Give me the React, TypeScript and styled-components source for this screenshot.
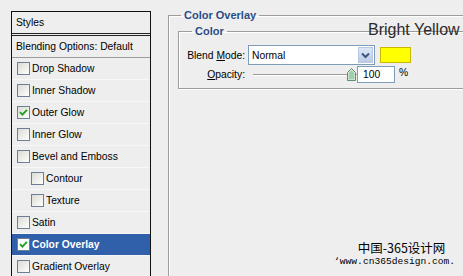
import React from "react";
import styled, { createGlobalStyle, css } from "styled-components";

const Global = createGlobalStyle`
  html, body { margin: 0; padding: 0; background: #eeeeee; overflow: hidden; }
  body { font-family: "Liberation Sans", Arial, sans-serif; font-size: 10.3px; color: #000; }
  #root { width: 463px; height: 276px; overflow: hidden; position: relative; }
`;

const Page = styled.div`
  display: flex;
  align-items: flex-start;
  padding-left: 11px;
  height: 276px;
`;

const StyleList = styled.div`
  margin-top: 11px;
  width: 140px;
  height: 280px;
  box-sizing: border-box;
  border: 1px solid #111;
  border-bottom: none;
  display: flex;
  flex-direction: column;
  flex: none;
`;

const HeaderRow = styled.div`
  height: 21px;
  display: flex;
  align-items: center;
  padding-left: 4px;
  border-bottom: 3px double #222;
`;

const Row = styled.div<{ $indent?: boolean; $active?: boolean; $strong?: boolean }>`
  height: 21px;
  display: flex;
  align-items: center;
  gap: 2px;
  padding-left: ${(p) => (p.$indent ? 19 : 5)}px;
  border-bottom: 1px solid ${(p) => (p.$strong ? "#9a9a9a" : "#f7f7f7")};
  ${(p) =>
    p.$active &&
    css`
      background: #3160aa;
      color: #fff;
      font-weight: bold;
    `}
`;

const PlainRow = styled(Row)`
  padding-left: 4px;
`;

const Box = styled.span<{ $light?: boolean }>`
  width: 11px;
  height: 11px;
  flex: none;
  border: 1px solid #6d7f96;
  background: ${(p) =>
    p.$light ? "#ffffff" : "linear-gradient(135deg, #dcdcd6 0%, #f4f4f0 70%, #ffffff 100%)"};
  display: flex;
  align-items: center;
  justify-content: center;
`;

const CheckBox = ({ checked, light }: { checked?: boolean; light?: boolean }) => (
  <Box $light={light}>
    {checked && (
      <svg width="9" height="9" viewBox="0 0 9 9">
        <path d="M1 4.2 L3.4 6.6 L8 1.8" fill="none" stroke="#21a121" strokeWidth="1.9" />
      </svg>
    )}
  </Box>
);

const Outer = styled.fieldset`
  margin: 8px 0 0 17px;
  padding: 2px 0 0 9px;
  width: 320px;
  min-height: 300px;
  flex: none;
  border: 1px solid #9c9c9c;
  box-shadow: inset 1px 1px 0 #ffffff;
  box-sizing: border-box;
`;

const Legend = styled.legend<{ $offset: number }>`
  margin-left: ${(p) => p.$offset}px;
  padding: 0 3px;
  line-height: 14px;
  font-weight: bold;
  font-size: 11px;
  color: #2a4d85;
`;

const Inner = styled.fieldset`
  margin: 0;
  padding: 7px 0 4px 0;
  width: 320px;
  border: 1px solid #9c9c9c;
  box-shadow: inset 1px 1px 0 #ffffff, 1px 1px 0 #ffffff;
  box-sizing: border-box;
`;

const FieldRow = styled.div<{ $h: number }>`
  display: flex;
  align-items: center;
  height: ${(p) => p.$h}px;
  margin-bottom: 1px;
`;

const Label = styled.label`
  width: 66px;
  text-align: right;
  flex: none;
  margin-right: 3px;
  u { text-decoration: underline; }
`;

const Select = styled.div`
  width: 127px;
  height: 20px;
  box-sizing: border-box;
  border: 1px solid #7f9db9;
  background: #fff;
  display: flex;
  align-items: center;
  justify-content: space-between;
  padding: 0 1px 0 3px;
`;

const DropButton = styled.span`
  width: 15px;
  height: 16px;
  box-sizing: border-box;
  border: 1px solid #b7c8e3;
  background: linear-gradient(#dce6f6, #bccbe6);
  display: flex;
  align-items: center;
  justify-content: center;
`;

const Swatch = styled.span`
  width: 31px;
  height: 16px;
  margin-left: 5px;
  box-sizing: border-box;
  background: #ffff00;
  border: 1px solid #c9b700;
`;

const Slider = styled.div`
  width: 104px;
  margin-left: 5px;
  height: 16px;
  position: relative;
  display: flex;
  align-items: center;
`;

const Track = styled.span`
  flex: 1;
  height: 1px;
  background: #9a9a9a;
  box-shadow: 0 1px 0 #ffffff;
`;

const Thumb = styled.svg`
  position: absolute;
  right: 1px;
  top: 1px;
`;

const NumInput = styled.div`
  width: 38px;
  height: 17px;
  box-sizing: border-box;
  border: 1px solid #7f9db9;
  background: #fff;
  padding-left: 5px;
  display: flex;
  align-items: center;
`;

const Percent = styled.span`
  margin-left: 4px;
  align-self: flex-start;
  margin-top: 1px;
`;

const Annotation = styled.div`
  position: absolute;
  left: 368px;
  top: 21px;
  font-size: 16px;
  line-height: 18px;
  color: #2b2b2b;
  font-family: "Liberation Sans", Arial, sans-serif;
  white-space: nowrap;
`;

const Watermark = styled.div`
  position: absolute;
  right: 8px;
  bottom: 7px;
  display: flex;
  flex-direction: column;
  align-items: center;
  color: #000;
  line-height: 14px;
`;

const WmTitle = styled.span`
  font-family: "Noto Sans CJK SC", sans-serif;
  font-size: 12.5px;
  margin-left: 14px;
`;

const WmUrl = styled.span`
  font-family: "Liberation Mono", monospace;
  font-size: 9.6px;
`;

const items: { name: string; checked?: boolean; indent?: boolean; active?: boolean }[] = [
  { name: "Drop Shadow" },
  { name: "Inner Shadow" },
  { name: "Outer Glow", checked: true },
  { name: "Inner Glow" },
  { name: "Bevel and Emboss" },
  { name: "Contour", indent: true },
  { name: "Texture", indent: true },
  { name: "Satin" },
  { name: "Color Overlay", checked: true, active: true },
  { name: "Gradient Overlay" },
];

export default function App() {
  return (
    <>
      <Global />
      <Page>
        <StyleList>
          <HeaderRow>Styles</HeaderRow>
          <PlainRow $strong>Blending Options: Default</PlainRow>
          {items.map((it) => (
            <Row key={it.name} $indent={it.indent} $active={it.active}>
              <CheckBox checked={it.checked} light={it.active} />
              <span>{it.name}</span>
            </Row>
          ))}
        </StyleList>
        <Outer>
          <Legend $offset={3}>Color Overlay</Legend>
          <Inner>
            <Legend $offset={13}>Color</Legend>
            <FieldRow $h={20}>
              <Label>
                Blend <u>M</u>ode:
              </Label>
              <Select>
                <span>Normal</span>
                <DropButton>
                  <svg width="9" height="7" viewBox="0 0 9 7">
                    <path d="M1 1.5 L4.5 5 L8 1.5" fill="none" stroke="#3d5680" strokeWidth="2" />
                  </svg>
                </DropButton>
              </Select>
              <Swatch />
            </FieldRow>
            <FieldRow $h={17}>
              <Label>
                <u>O</u>pacity:
              </Label>
              <Slider>
                <Track />
                <Thumb width="9" height="13" viewBox="0 0 9 13">
                  <path d="M0.5 4.5 L4.5 0.5 L8.5 4.5 L8.5 12.5 L0.5 12.5 Z" fill="#cfe3d2" stroke="#5f8f6a" />
                  <path d="M2 5 L4.5 2.5 L7 5 L7 11 L2 11 Z" fill="#9fcfa6" />
                </Thumb>
              </Slider>
              <NumInput>100</NumInput>
              <Percent>%</Percent>
            </FieldRow>
          </Inner>
        </Outer>
      </Page>
      <Annotation>Bright Yellow</Annotation>
      <Watermark>
        <WmTitle>中国-365设计网</WmTitle>
        <WmUrl>‘www.cn365design.com.</WmUrl>
      </Watermark>
    </>
  );
}
